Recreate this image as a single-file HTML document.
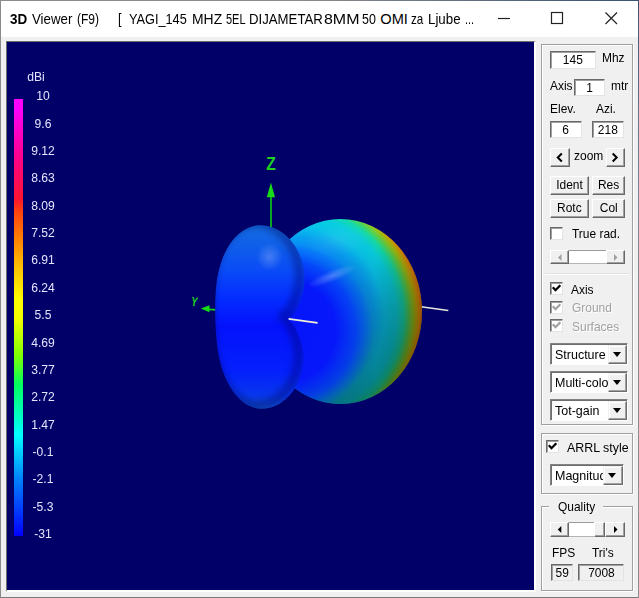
<!DOCTYPE html>
<html>
<head>
<meta charset="utf-8">
<title>3D Viewer (F9)</title>
<style>
*{box-sizing:border-box;margin:0;padding:0}
html,body{width:639px;height:598px;overflow:hidden;background:#f0f0f0}
body{position:relative;font-family:"Liberation Sans",sans-serif;font-size:13px;color:#000}
.abs{position:absolute}
#win{position:absolute;left:0;top:0;width:639px;height:598px;border:1px solid #8a8a8a;border-right-color:#6b7f9a;border-bottom-color:#7a7a7a}
#title{position:absolute;left:1px;top:1px;width:637px;height:36px;background:#fff}
.tt{position:absolute;top:8px;font-size:14.6px;line-height:20px;white-space:nowrap;transform-origin:0 50%;transform:scaleX(.9);color:#000}
#canvas{position:absolute;left:6px;top:41px;width:530px;height:551px;background:#000068;border-style:solid;border-width:1px 2px 2px 1px;border-color:#6e6e6e #fff #fff #6e6e6e}
.t{position:absolute;white-space:nowrap;line-height:14px;height:14px;transform:scaleX(.92);transform-origin:0 0}
.s{display:inline-block;transform:scaleX(.92)}
.lbl{position:absolute;white-space:nowrap;color:#e4e4ff;font-size:12.5px;line-height:14px;height:14px;transform:scaleX(.97)}
.grp{position:absolute;border:1px solid #a0a0a0;box-shadow:1px 1px 0 #fff, inset 1px 1px 0 #fff}
.inp{position:absolute;background:#fff;border:1px solid;border-color:#696969 #e3e3e3 #e3e3e3 #696969;box-shadow:inset 1px 1px 0 #a0a0a0;text-align:center;line-height:15px;white-space:nowrap}
.ro{background:#f0f0f0}
.btn{position:absolute;background:#f0f0f0;border:1px solid;border-color:#fff #696969 #696969 #fff;box-shadow:inset -1px -1px 0 #a0a0a0;text-align:center;white-space:nowrap}
.chk{position:absolute;width:13px;height:13px;background:#fff;border:1px solid;border-color:#696969 #e3e3e3 #e3e3e3 #696969;box-shadow:inset 1px 1px 0 #a0a0a0}
.dis{color:#a0a0a0;text-shadow:1px 1px 0 #fff}
.cmb{position:absolute;background:#fff;border:1px solid;border-color:#828282 #fff #fff #828282;box-shadow:inset 1px 1px 0 #6e6e6e;overflow:hidden;white-space:nowrap}
.cmb span{position:absolute;left:3.5px;top:2.6px;line-height:15px;transform:scaleX(.96);transform-origin:0 0}
.cmb i{position:absolute;right:0;top:1px;bottom:0;width:19px;background:#f0f0f0;border:1px solid;border-color:#f0f0f0 #6d6d6d #6d6d6d #f0f0f0;box-shadow:inset -1px -1px 0 #a0a0a0,inset 1px 1px 0 #fff}
.cmb i:after{content:"";position:absolute;left:4px;top:6px;border:4.5px solid transparent;border-top:5px solid #000;border-bottom:0}
</style>
</head>
<body>
<div id="win"></div>
<div class="abs" style="left:0;top:0;width:639px;height:1px;background:linear-gradient(to right,#8c8c8c 0,#8c8c8c 300px,#4a5f78 560px,#3a5270 639px)"></div>
<div class="abs" style="left:638px;top:0;width:1px;height:598px;background:linear-gradient(to bottom,#3a5270 0,#4d6a8c 60px,#7c8896 200px,#8e8e8e 320px,#8e8e8e 598px)"></div>
<div id="title">
  <span class="tt" style="left:8.8px;transform:scaleX(0.921);font-weight:bold">3D</span>
  <span class="tt" style="left:31.3px;transform:scaleX(0.909)">Viewer</span>
  <span class="tt" style="left:75.6px;transform:scaleX(0.824)">(F9)</span>
  <span class="tt" style="left:117.1px;transform:scaleX(0.867)">[</span>
  <span class="tt" style="left:128.4px;transform:scaleX(0.872)">YAGI_145</span>
  <span class="tt" style="left:190.6px;transform:scaleX(0.953)">MHZ</span>
  <span class="tt" style="left:225.3px;transform:scaleX(0.752)">5EL</span>
  <span class="tt" style="left:248.1px;transform:scaleX(0.904)">DIJAMETAR</span>
  <span class="tt" style="left:323.4px;transform:scaleX(1.093)">8MM</span>
  <span class="tt" style="left:361.1px;transform:scaleX(0.853)">50</span>
  <span class="tt" style="left:379.3px;transform:scaleX(1.000)">OMI</span>
  <span class="tt" style="left:409.8px;transform:scaleX(0.800)">za</span>
  <span class="tt" style="left:427.3px;transform:scaleX(0.912)">Ljube</span>
  <span class="tt" style="left:463.9px;transform:scaleX(0.750)">...</span>
  <svg class="abs" style="left:0;top:0" width="637" height="36" viewBox="1 1 637 36">
    <path d="M498 18.5H510" stroke="#222" stroke-width="1.2" fill="none"/>
    <rect x="551.5" y="12.5" width="11" height="11" stroke="#222" stroke-width="1.2" fill="none"/>
    <path d="M605.5 12.5L617 24M617 12.5L605.5 24" stroke="#222" stroke-width="1.2" fill="none"/>
  </svg>
</div>

<div id="canvas"></div>
<!-- scale -->
<div class="abs" id="bar" style="left:14px;top:99px;width:9px;height:437px;background:linear-gradient(to bottom,#ff00ff 0px,#ff00ff 8px,#ff0090 56px,#ff1430 100px,#ff4010 112px,#ff8000 140px,#ffc000 168px,#ffff00 201px,#f0ff00 221px,#80ff00 256px,#00ff60 286px,#00ffff 336px,#0080ff 381px,#0000ff 437px)"></div>
<div class="lbl" style="left:27px;top:69.7px">dBi</div>
<div class="lbl" style="left:22.5px;width:40px;text-align:center;top:89.2px">10</div>
<div class="lbl" style="left:22.5px;width:40px;text-align:center;top:116.5px">9.6</div>
<div class="lbl" style="left:22.5px;width:40px;text-align:center;top:143.9px">9.12</div>
<div class="lbl" style="left:22.5px;width:40px;text-align:center;top:171.3px">8.63</div>
<div class="lbl" style="left:22.5px;width:40px;text-align:center;top:198.7px">8.09</div>
<div class="lbl" style="left:22.5px;width:40px;text-align:center;top:226.0px">7.52</div>
<div class="lbl" style="left:22.5px;width:40px;text-align:center;top:253.4px">6.91</div>
<div class="lbl" style="left:22.5px;width:40px;text-align:center;top:280.8px">6.24</div>
<div class="lbl" style="left:22.5px;width:40px;text-align:center;top:308.2px">5.5</div>
<div class="lbl" style="left:22.5px;width:40px;text-align:center;top:335.5px">4.69</div>
<div class="lbl" style="left:22.5px;width:40px;text-align:center;top:362.9px">3.77</div>
<div class="lbl" style="left:22.5px;width:40px;text-align:center;top:390.3px">2.72</div>
<div class="lbl" style="left:22.5px;width:40px;text-align:center;top:417.7px">1.47</div>
<div class="lbl" style="left:22.5px;width:40px;text-align:center;top:445.0px">-0.1</div>
<div class="lbl" style="left:22.5px;width:40px;text-align:center;top:472.4px">-2.1</div>
<div class="lbl" style="left:22.5px;width:40px;text-align:center;top:499.8px">-5.3</div>
<div class="lbl" style="left:22.5px;width:40px;text-align:center;top:527.2px">-31</div>
<!-- blob -->
<!--BLOBSTART--><svg class="abs" style="left:0;top:0" width="639" height="598" viewBox="0 0 639 598">
<defs>
<radialGradient id="gF" gradientUnits="userSpaceOnUse" cx="295" cy="316" r="128">
<stop offset="0" stop-color="#0880ff"/>
<stop offset=".52" stop-color="#0888ff"/>
<stop offset=".62" stop-color="#08a4f4"/>
<stop offset=".70" stop-color="#08c4ec"/>
<stop offset=".79" stop-color="#08d0e0"/>
<stop offset=".85" stop-color="#14dcac"/>
<stop offset=".885" stop-color="#48d860"/>
<stop offset=".92" stop-color="#90cc20"/>
<stop offset=".945" stop-color="#c4b808"/>
<stop offset=".97" stop-color="#e89808"/>
<stop offset="1" stop-color="#e87808"/>
</radialGradient>
<radialGradient id="gC" gradientUnits="userSpaceOnUse" cx="0" cy="0" r="1">
<stop offset="0" stop-color="#0614fa"/>
<stop offset=".58" stop-color="#0618fa"/>
<stop offset=".8" stop-color="#0430ff" stop-opacity=".72"/>
<stop offset="1" stop-color="#0450ff" stop-opacity="0"/>
</radialGradient>
<linearGradient id="gL" gradientUnits="userSpaceOnUse" x1="335" y1="219" x2="348" y2="404">
<stop offset="0" stop-color="#000" stop-opacity="0"/>
<stop offset=".2" stop-color="#000" stop-opacity=".04"/>
<stop offset=".5" stop-color="#000" stop-opacity=".2"/>
<stop offset=".8" stop-color="#000" stop-opacity=".34"/>
<stop offset="1" stop-color="#000" stop-opacity=".43"/>
</linearGradient>
<linearGradient id="gR" gradientUnits="userSpaceOnUse" x1="375" y1="0" x2="423" y2="0">
<stop offset="0" stop-color="#000" stop-opacity="0"/>
<stop offset="1" stop-color="#200" stop-opacity=".22"/>
</linearGradient>
<radialGradient id="gH" gradientUnits="userSpaceOnUse" cx="0" cy="0" r="1">
<stop offset="0" stop-color="#fff" stop-opacity=".38"/>
<stop offset="1" stop-color="#fff" stop-opacity="0"/>
</radialGradient>
<clipPath id="cF"><ellipse cx="340.5" cy="311.5" rx="81.5" ry="92.5"/></clipPath>
<clipPath id="cP"><path d="M215.2 311.7C215.2 305.2 215.2 298.7 215.7 292.3C216.2 286.0 216.8 279.7 218.1 273.6C219.5 267.5 221.2 261.3 223.5 255.9C225.9 250.4 228.8 245.1 232.1 240.9C235.4 236.7 239.3 233.2 243.1 230.7C246.9 228.2 251.1 226.6 255.1 225.8C259.1 225.0 263.2 225.2 267.1 226.0C271.1 226.8 275.2 228.4 278.9 230.6C282.6 232.7 286.3 235.7 289.4 238.9C292.5 242.1 295.2 245.9 297.3 249.9C299.5 253.8 301.1 258.1 302.3 262.4C303.5 266.7 304.3 271.2 304.5 275.6C304.8 280.0 304.5 284.5 303.9 288.8C303.2 293.1 301.8 297.3 300.4 301.5C298.9 305.6 297.1 310.6 295.0 313.5C293.0 316.4 288.5 317.2 288.2 319.0C287.9 320.8 291.6 321.7 293.3 324.3C295.0 326.9 296.8 330.9 298.3 334.5C299.8 338.0 301.3 341.8 302.2 345.8C303.1 349.8 303.7 354.2 303.7 358.5C303.7 362.7 303.1 367.3 302.1 371.6C301.0 375.8 299.4 380.2 297.4 384.1C295.4 388.0 292.9 391.7 290.1 394.8C287.3 397.9 284.1 400.7 280.7 402.9C277.3 405.0 273.5 406.7 269.7 407.7C266.0 408.6 262.0 409.0 258.2 408.5C254.4 408.0 250.5 406.7 247.0 404.7C243.4 402.6 240.0 399.7 236.9 396.2C233.8 392.7 230.9 388.5 228.4 383.9C225.9 379.2 223.7 374.0 221.9 368.5C220.2 363.0 218.9 357.0 217.9 350.9C216.9 344.7 216.4 338.1 215.9 331.6C215.5 325.1 215.2 318.3 215.2 311.7Z"/></clipPath>
<linearGradient id="gP" gradientUnits="userSpaceOnUse" x1="260" y1="225" x2="260" y2="409">
<stop offset="0" stop-color="#146ce0"/>
<stop offset=".10" stop-color="#1060e8"/>
<stop offset=".24" stop-color="#0a4cf6"/>
<stop offset=".40" stop-color="#042cff"/>
<stop offset=".55" stop-color="#0412fc"/>
<stop offset=".8" stop-color="#0420fc"/>
<stop offset=".93" stop-color="#0838ec"/>
<stop offset="1" stop-color="#1054cc"/>
</linearGradient>
<linearGradient id="gPe" gradientUnits="userSpaceOnUse" x1="216" y1="0" x2="305" y2="0">
<stop offset="0" stop-color="#000060" stop-opacity=".18"/>
<stop offset=".12" stop-color="#000060" stop-opacity="0"/>
<stop offset=".78" stop-color="#000060" stop-opacity="0"/>
<stop offset="1" stop-color="#000050" stop-opacity=".42"/>
</linearGradient>
<filter id="bl" x="-50%" y="-50%" width="200%" height="200%"><feGaussianBlur stdDeviation="3"/></filter>
</defs>
<!-- axes -->
<path d="M271 197V228" stroke="#10d010" stroke-width="1.6"/>
<path d="M270.9 182.5L275 197.3H266.8z" fill="#18dc18"/>
<text x="266.3" y="170.3" font-family="Liberation Sans,sans-serif" font-weight="bold" font-size="18" fill="#1ed21e" textLength="9.6" lengthAdjust="spacingAndGlyphs">Z</text>
<path d="M208 309.3L217.5 309.9" stroke="#10d010" stroke-width="1.8"/>
<path d="M200.8 308.4L209.5 305.2V312.2z" fill="#18dc18"/>
<text x="0" y="0" transform="translate(190.6 305.6) rotate(10)" font-family="Liberation Sans,sans-serif" font-weight="bold" font-size="13" fill="#1ed21e" textLength="6.4" lengthAdjust="spacingAndGlyphs">Y</text>
<!-- boom right -->
<path d="M421 306.8L448.3 310.5" stroke="#e6e6dc" stroke-width="1.6"/>
<!-- front lobe -->
<g clip-path="url(#cF)">
<rect x="255" y="215" width="172" height="195" fill="url(#gF)"/>
<rect x="255" y="215" width="172" height="195" fill="url(#gL)"/>
<rect x="255" y="215" width="172" height="195" fill="url(#gR)"/>
<ellipse cx="0" cy="0" rx="1" ry="1" transform="translate(285 331) scale(88 88)" fill="url(#gC)"/>
<ellipse cx="0" cy="0" rx="1" ry="1" transform="translate(332 276) rotate(-22) scale(26 6)" fill="url(#gH)" opacity=".7"/>
<ellipse cx="0" cy="0" rx="1" ry="1" transform="translate(338 240) rotate(-5) scale(34 16)" fill="url(#gH)" opacity=".2"/>
</g>
<!-- back lobe -->
<g clip-path="url(#cP)">
<rect x="210" y="220" width="100" height="195" fill="url(#gP)"/>
<path d="M215.2 311.7C215.2 305.2 215.2 298.7 215.7 292.3C216.2 286.0 216.8 279.7 218.1 273.6C219.5 267.5 221.2 261.3 223.5 255.9C225.9 250.4 228.8 245.1 232.1 240.9C235.4 236.7 239.3 233.2 243.1 230.7C246.9 228.2 251.1 226.6 255.1 225.8C259.1 225.0 263.2 225.2 267.1 226.0C271.1 226.8 275.2 228.4 278.9 230.6C282.6 232.7 286.3 235.7 289.4 238.9C292.5 242.1 295.2 245.9 297.3 249.9C299.5 253.8 301.1 258.1 302.3 262.4C303.5 266.7 304.3 271.2 304.5 275.6C304.8 280.0 304.5 284.5 303.9 288.8C303.2 293.1 301.8 297.3 300.4 301.5C298.9 305.6 297.1 310.6 295.0 313.5C293.0 316.4 288.5 317.2 288.2 319.0C287.9 320.8 291.6 321.7 293.3 324.3C295.0 326.9 296.8 330.9 298.3 334.5C299.8 338.0 301.3 341.8 302.2 345.8C303.1 349.8 303.7 354.2 303.7 358.5C303.7 362.7 303.1 367.3 302.1 371.6C301.0 375.8 299.4 380.2 297.4 384.1C295.4 388.0 292.9 391.7 290.1 394.8C287.3 397.9 284.1 400.7 280.7 402.9C277.3 405.0 273.5 406.7 269.7 407.7C266.0 408.6 262.0 409.0 258.2 408.5C254.4 408.0 250.5 406.7 247.0 404.7C243.4 402.6 240.0 399.7 236.9 396.2C233.8 392.7 230.9 388.5 228.4 383.9C225.9 379.2 223.7 374.0 221.9 368.5C220.2 363.0 218.9 357.0 217.9 350.9C216.9 344.7 216.4 338.1 215.9 331.6C215.5 325.1 215.2 318.3 215.2 311.7Z" transform="translate(-5 -3)" fill="none" stroke="#000058" stroke-width="10" filter="url(#bl)" opacity=".36"/>
<ellipse cx="0" cy="0" rx="1" ry="1" transform="translate(269.5 257) scale(13 14)" fill="url(#gH)" opacity=".6"/>
</g>
<!-- boom left -->
<path d="M288.6 318.9L317.6 322.9" stroke="#f0f0d8" stroke-width="1.8"/>
</svg><!--BLOBEND-->

<!-- right panel -->
<div class="grp" style="left:541px;top:44px;width:92px;height:381px"></div>
<div class="grp" style="left:541px;top:433px;width:92px;height:61px"></div>
<div class="grp" style="left:541px;top:506px;width:92px;height:85px"></div>
<div class="inp" style="left:550px;top:51px;width:46px;height:18px"><span class="s">145</span></div>
<div class="t" style="left:601.5px;top:51.2px">Mhz</div>
<div class="t" style="left:550px;top:79px">Axis</div>
<div class="inp" style="left:574px;top:79px;width:31px;height:17px"><span class="s">1</span></div>
<div class="t" style="left:611px;top:79px">mtr</div>
<div class="t" style="left:550px;top:102px">Elev.</div>
<div class="t" style="left:596px;top:102px">Azi.</div>
<div class="inp" style="left:550px;top:121px;width:32px;height:17px"><span class="s">6</span></div>
<div class="inp" style="left:592px;top:121px;width:32px;height:17px"><span class="s">218</span></div>
<div class="btn" style="left:550px;top:148px;width:20px;height:19px"><svg class="abs" style="left:0;top:0" width="18" height="17"><path d="M10.8 4.5L6.8 8.5L10.8 12.5" stroke="#000" stroke-width="2" fill="none"/></svg></div>
<div class="t" style="left:574px;top:149px">zoom</div>
<div class="btn" style="left:606px;top:148px;width:19px;height:19px"><svg class="abs" style="left:0;top:0" width="18" height="17"><path d="M5.7 4.5L9.7 8.5L5.7 12.5" stroke="#000" stroke-width="2" fill="none"/></svg></div>
<div class="btn" style="left:550px;top:176px;width:39px;height:19px;line-height:16px"><span class="s">Ident</span></div>
<div class="btn" style="left:592px;top:176px;width:33px;height:19px;line-height:16px"><span class="s">Res</span></div>
<div class="btn" style="left:550px;top:199px;width:39px;height:19px;line-height:16px"><span class="s">Rotc</span></div>
<div class="btn" style="left:592px;top:199px;width:33px;height:19px;line-height:16px"><span class="s">Col</span></div>
<div class="chk" style="left:550px;top:227px"></div>
<div class="t" style="left:572px;top:227.3px">True rad.</div>
<!-- disabled scrollbar -->
<div class="abs" style="left:550px;top:250px;width:75px;height:14px;background:#fff;border-top:1px solid #9c9c9c;border-bottom:1px solid #b4b4b4"></div>
<div class="btn" style="left:550px;top:250px;width:19px;height:14px"><svg class="abs" style="left:0;top:0" width="17" height="12"><path d="M10.5 3L7 6.5L10.5 10z" fill="#a0a0a0"/></svg></div>
<div class="btn" style="left:606px;top:250px;width:19px;height:14px"><svg class="abs" style="left:0;top:0" width="17" height="12"><path d="M7 3L10.5 6.5L7 10z" fill="#a0a0a0"/></svg></div>
<div class="abs" style="left:545px;top:273px;width:84px;height:2px;border-top:1px solid #e0e0e0;border-bottom:1px solid #fff"></div>
<div class="chk" style="left:550px;top:282px"><svg class="abs" style="left:0;top:0" width="11" height="11"><path d="M1.8 4.3L4.5 7.2L9.3 2.2" stroke="#000" stroke-width="2.3" fill="none"/></svg></div>
<div class="t" style="left:571px;top:282.5px">Axis</div>
<div class="chk ro" style="left:550px;top:301px"><svg class="abs" style="left:0;top:0" width="11" height="11"><path d="M1.8 4.3L4.5 7.2L9.3 2.2" stroke="#a0a0a0" stroke-width="2.3" fill="none"/></svg></div>
<div class="t dis" style="left:571.5px;top:301.3px">Ground</div>
<div class="chk ro" style="left:550px;top:319px"><svg class="abs" style="left:0;top:0" width="11" height="11"><path d="M1.8 4.3L4.5 7.2L9.3 2.2" stroke="#a0a0a0" stroke-width="2.3" fill="none"/></svg></div>
<div class="t dis" style="left:571.5px;top:320px">Surfaces</div>
<div class="cmb" style="left:550px;top:343px;width:78px;height:22px"><span>Structure</span><i></i></div>
<div class="cmb" style="left:550px;top:371px;width:78px;height:22px"><span>Multi-color</span><i></i></div>
<div class="cmb" style="left:550px;top:399px;width:78px;height:22px"><span>Tot-gain</span><i></i></div>

<div class="chk" style="left:546px;top:440px"><svg class="abs" style="left:0;top:0" width="11" height="11"><path d="M1.8 4.3L4.5 7.2L9.3 2.2" stroke="#000" stroke-width="2.3" fill="none"/></svg></div>
<div class="t" style="left:566.5px;top:441px;transform:scaleX(.955)">ARRL style</div>
<div class="cmb" style="left:550px;top:464px;width:74px;height:22px"><span>Magnitude</span><i style="width:20.5px"></i></div>

<div class="abs" style="left:549px;top:499px;width:54px;background:#f0f0f0;height:16px"></div>
<div class="t" style="left:558px;top:500px">Quality</div>
<div class="abs" style="left:550px;top:522px;width:75px;height:15px;background:#fff;border-top:1px solid #9c9c9c;border-bottom:1px solid #b4b4b4"></div>
<div class="btn" style="left:550px;top:522px;width:19px;height:15px"><svg class="abs" style="left:0;top:0" width="17" height="13"><path d="M10.3 3L6.8 6.5L10.3 10z" fill="#000"/></svg></div>
<div class="btn" style="left:594px;top:522px;width:11px;height:15px"></div>
<div class="btn" style="left:605px;top:522px;width:20px;height:15px"><svg class="abs" style="left:0;top:0" width="18" height="13"><path d="M8 3L11.5 6.5L8 10z" fill="#000"/></svg></div>
<div class="t" style="left:551.7px;top:545.7px">FPS</div>
<div class="t" style="left:592px;top:545.7px">Tri's</div>
<div class="inp ro" style="left:551px;top:564px;width:22px;height:17px"><span class="s">59</span></div>
<div class="inp ro" style="left:578px;top:564px;width:46px;height:17px"><span class="s">7008</span></div>


</body>
</html>
